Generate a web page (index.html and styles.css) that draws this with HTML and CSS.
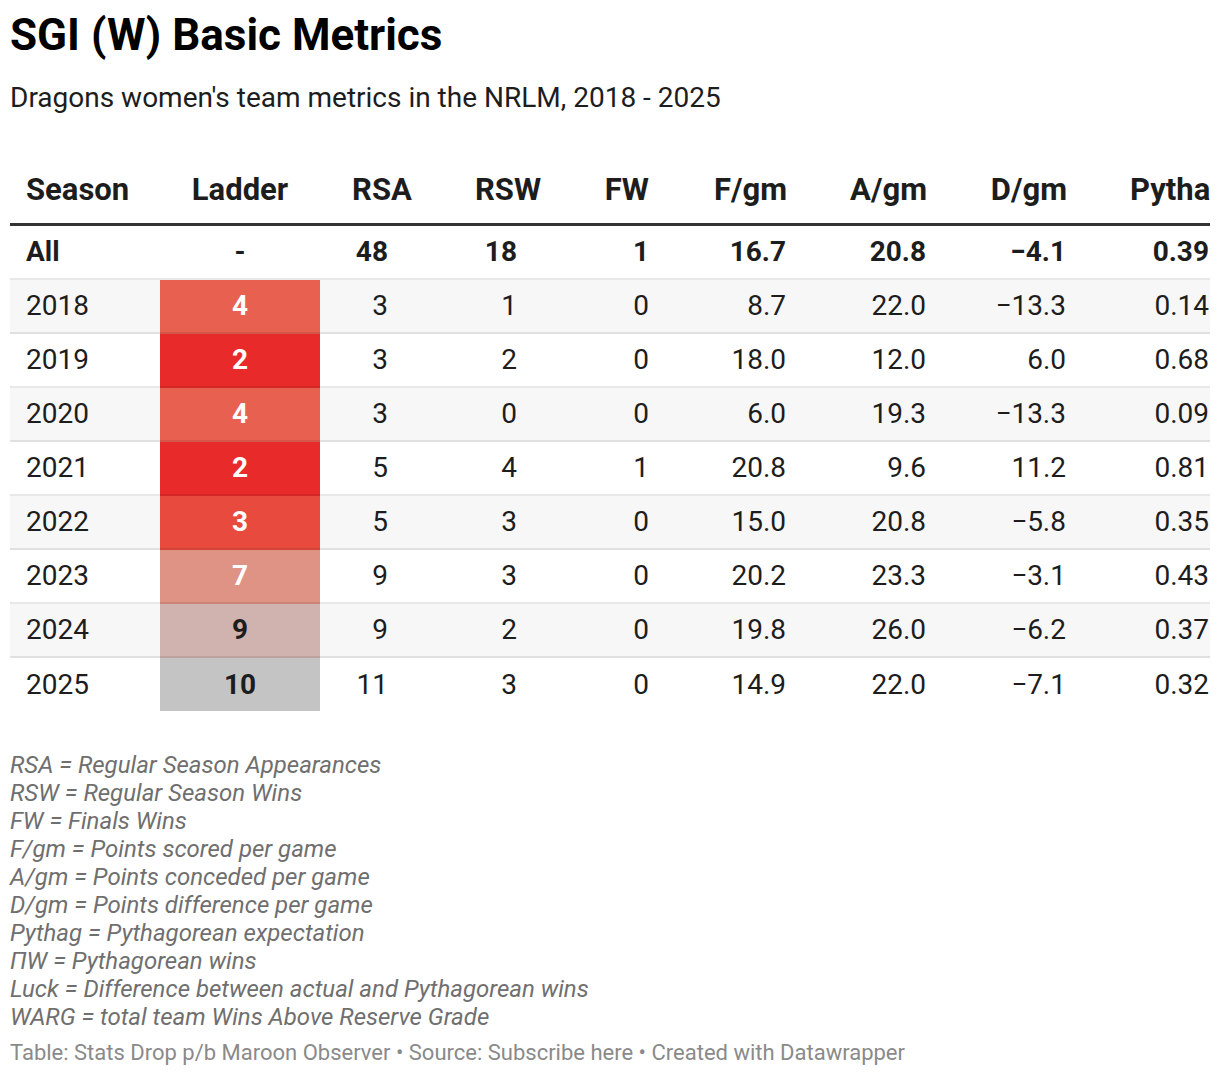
FILE: index.html
```html
<!DOCTYPE html>
<html lang="en">
<head>
<meta charset="utf-8">
<title>SGI (W) Basic Metrics</title>
<link rel="stylesheet" href="styles.css">
</head>
<body>
<div class="chart">
  <h1 class="title">SGI (W) Basic Metrics</h1>
  <p class="subtitle">Dragons women's team metrics in the NRLM, 2018 - 2025</p>
  <div class="table-wrap">
    <table class="metrics">
      <colgroup>
        <col class="c-season"><col class="c-ladder"><col class="c-rsa"><col class="c-rsw"><col class="c-fw"><col class="c-num"><col class="c-num"><col class="c-num"><col class="c-pyth">
      </colgroup>
      <thead>
        <tr>
          <th class="season">Season</th>
          <th class="ladder">Ladder</th>
          <th class="mid">RSA</th>
          <th class="mid">RSW</th>
          <th class="fw">FW</th>
          <th class="num">F/gm</th>
          <th class="num">A/gm</th>
          <th class="num">D/gm</th>
          <th class="pyth">Pythag</th>
        </tr>
      </thead>
      <tbody>
        <tr class="total">
          <td class="season">All</td><td class="ladder">-</td><td class="rsa">48</td><td class="rsw">18</td><td class="fw">1</td><td class="num">16.7</td><td class="num">20.8</td><td class="num">−4.1</td><td class="pyth">0.39</td>
        </tr>
        <tr class="alt">
          <td class="season">2018</td><td class="ladder l4">4</td><td class="rsa">3</td><td class="rsw">1</td><td class="fw">0</td><td class="num">8.7</td><td class="num">22.0</td><td class="num">−13.3</td><td class="pyth">0.14</td>
        </tr>
        <tr>
          <td class="season">2019</td><td class="ladder l2">2</td><td class="rsa">3</td><td class="rsw">2</td><td class="fw">0</td><td class="num">18.0</td><td class="num">12.0</td><td class="num">6.0</td><td class="pyth">0.68</td>
        </tr>
        <tr class="alt">
          <td class="season">2020</td><td class="ladder l4">4</td><td class="rsa">3</td><td class="rsw">0</td><td class="fw">0</td><td class="num">6.0</td><td class="num">19.3</td><td class="num">−13.3</td><td class="pyth">0.09</td>
        </tr>
        <tr>
          <td class="season">2021</td><td class="ladder l2">2</td><td class="rsa">5</td><td class="rsw">4</td><td class="fw">1</td><td class="num">20.8</td><td class="num">9.6</td><td class="num">11.2</td><td class="pyth">0.81</td>
        </tr>
        <tr class="alt">
          <td class="season">2022</td><td class="ladder l3">3</td><td class="rsa">5</td><td class="rsw">3</td><td class="fw">0</td><td class="num">15.0</td><td class="num">20.8</td><td class="num">−5.8</td><td class="pyth">0.35</td>
        </tr>
        <tr>
          <td class="season">2023</td><td class="ladder l7">7</td><td class="rsa">9</td><td class="rsw">3</td><td class="fw">0</td><td class="num">20.2</td><td class="num">23.3</td><td class="num">−3.1</td><td class="pyth">0.43</td>
        </tr>
        <tr class="alt">
          <td class="season">2024</td><td class="ladder l9">9</td><td class="rsa">9</td><td class="rsw">2</td><td class="fw">0</td><td class="num">19.8</td><td class="num">26.0</td><td class="num">−6.2</td><td class="pyth">0.37</td>
        </tr>
        <tr class="last">
          <td class="season">2025</td><td class="ladder l10">10</td><td class="rsa">11</td><td class="rsw">3</td><td class="fw">0</td><td class="num">14.9</td><td class="num">22.0</td><td class="num">−7.1</td><td class="pyth">0.32</td>
        </tr>
      </tbody>
    </table>
  </div>
  <div class="notes">
    <p>RSA = Regular Season Appearances</p>
    <p>RSW = Regular Season Wins</p>
    <p>FW = Finals Wins</p>
    <p>F/gm = Points scored per game</p>
    <p>A/gm = Points conceded per game</p>
    <p>D/gm = Points difference per game</p>
    <p>Pythag = Pythagorean expectation</p>
    <p>ΠW = Pythagorean wins</p>
    <p>Luck = Difference between actual and Pythagorean wins</p>
    <p>WARG = total team Wins Above Reserve Grade</p>
  </div>
  <p class="source">Table: Stats Drop p/b Maroon Observer • Source: Subscribe here • Created with Datawrapper</p>
</div>
</body>
</html>
```

FILE: styles.css
```css
* { box-sizing: border-box; }

html, body {
  margin: 0;
  padding: 0;
  background: #ffffff;
}

body {
  font-family: Roboto, "Liberation Sans", sans-serif;
  color: #1d1d1d;
}

.chart {
  padding: 8px 10px 0 10px;
  width: 1220px;
}

.title {
  margin: 0;
  font-size: 44px;
  line-height: 54px;
  font-weight: 700;
  color: #000000;
}

.subtitle {
  margin: 19px 0 0 0;
  font-size: 28px;
  line-height: 34px;
  font-weight: 400;
  color: #1d1d1d;
}

.table-wrap {
  margin-top: 56px;
  width: 1200px;
  overflow: hidden;
}

.metrics {
  width: 1267px;
  table-layout: fixed;
  border-collapse: separate;
  border-spacing: 0;
}

.c-season { width: 150px; }
.c-ladder { width: 160px; }
.c-rsa { width: 124px; }
.c-rsw { width: 128px; }
.c-fw { width: 88px; }
.c-num { width: 140px; }
.c-pyth { width: 200px; }

.metrics th {
  font-size: 31px;
  line-height: 37px;
  font-weight: 700;
  color: #1d1d1d;
  padding: 0 0 15px 0;
  border-bottom: 3px solid #333333;
  white-space: nowrap;
}

.metrics th.season { text-align: left; padding-left: 16px; }
.metrics th.ladder { text-align: center; }
.metrics th.mid { text-align: center; }
.metrics th.fw { text-align: right; padding-right: 11px; }
.metrics th.num { text-align: right; padding-right: 13px; }
.metrics th.pyth { text-align: left; padding-left: 50px; }

.metrics td {
  font-size: 28px;
  line-height: 52px;
  height: 54px;
  padding: 0;
  border-bottom: 2px solid rgba(0, 0, 0, 0.09);
  white-space: nowrap;
}

.metrics tr.last td { border-bottom: none; height: 53px; }

.metrics tr.alt td { background-color: #f7f7f7; }

.metrics tr.total td { font-weight: 700; }

.metrics td.season { text-align: left; padding-left: 16px; }
.metrics td.ladder { text-align: center; font-weight: 700; }
.metrics td.rsa { text-align: right; padding-right: 56px; }
.metrics td.rsw { text-align: right; padding-right: 55px; }
.metrics td.fw { text-align: right; padding-right: 11px; }
.metrics td.num { text-align: right; padding-right: 14px; }
.metrics td.pyth { text-align: right; padding-right: 71px; }

.metrics tr td.l2 { background-color: #e82b2a; color: #ffffff; }
.metrics tr td.l3 { background-color: #e84a3e; color: #ffffff; }
.metrics tr td.l4 { background-color: #e76050; color: #ffffff; }
.metrics tr td.l7 { background-color: #df9385; color: #ffffff; }
.metrics tr td.l9 { background-color: #d0b3ae; color: #1d1d1d; }
.metrics tr td.l10 { background-color: #c4c4c4; color: #1d1d1d; }

.notes {
  margin-top: 40px;
}

.notes p {
  margin: 0;
  font-size: 24px;
  line-height: 28px;
  font-style: italic;
  color: #6f6f6f;
}

.source {
  margin: 8px 0 0 0;
  font-size: 22px;
  line-height: 28px;
  color: #8a8a8a;
}
```
